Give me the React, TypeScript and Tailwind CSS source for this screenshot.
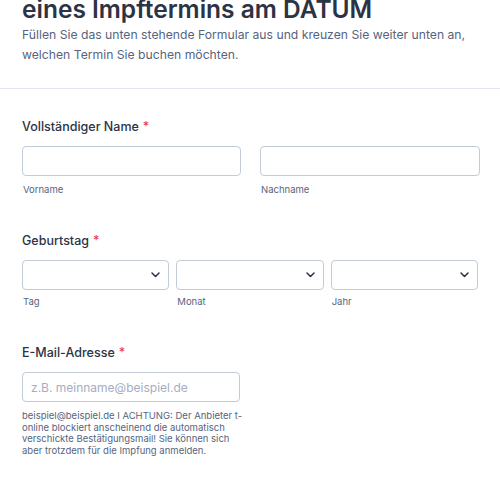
import React from 'react';

const Chevron = () => (
    <svg width="9" height="6" viewBox="0 0 9 6" fill="none" className="shrink-0">
        <path d="M1 1l3.5 3.5L8 1" stroke="#2c3345" strokeWidth="1.5" strokeLinecap="round" strokeLinejoin="round" />
    </svg>
);

const Required = () => <span className="text-[#f23a3c] ml-[4px]">*</span>;

function SelectBox({ label }: { label: string }) {
    return (
        <div className="flex flex-col flex-1">
            <div className="h-[30px] border border-[#c3cad8] rounded-[4px] flex items-center justify-end pr-[8px] bg-white">
                <Chevron />
            </div>
            <span className="text-[9.5px] leading-[12px] text-[#57647e] mt-[6px] pl-[1px]">{label}</span>
        </div>
    );
}

export default function App() {
    return (
        <div className="w-[500px] h-[484px] overflow-hidden bg-white text-[#2c3345]" style={{ fontFamily: 'Inter, "Noto Sans", sans-serif' }}>
            <header className="px-[22px] pb-[23px] border-b border-[#e3e5f5] -mt-[6px]">
                <h1 className="text-[24.5px] font-semibold leading-[30px] text-[#2c3345]">
                    eines Impftermins am DATUM
                </h1>
                <p className="text-[12.2px] leading-[20px] text-[#57647e] mt-[1px]">
                    Füllen Sie das unten stehende Formular aus und kreuzen Sie weiter unten an, welchen Termin Sie buchen möchten.
                </p>
            </header>

            <div className="px-[22px] pt-[29px]">
                <label className="block text-[12.5px] font-medium leading-[18px]">
                    Vollständiger Name<Required />
                </label>
                <div className="flex gap-[19px] mt-[10px]">
                    <div className="flex flex-col w-[219px]">
                        <input className="h-[30px] border border-[#c3cad8] rounded-[4px] outline-none" />
                        <span className="text-[9.5px] leading-[12px] text-[#57647e] mt-[8px] pl-[1px]">Vorname</span>
                    </div>
                    <div className="flex flex-col w-[220px]">
                        <input className="h-[30px] border border-[#c3cad8] rounded-[4px] outline-none" />
                        <span className="text-[9.5px] leading-[12px] text-[#57647e] mt-[8px] pl-[1px]">Nachname</span>
                    </div>
                </div>

                <label className="block text-[12.5px] font-medium leading-[18px] mt-[36px]">
                    Geburtstag<Required />
                </label>
                <div className="flex gap-[7px] mt-[10px] w-[456px]">
                    <SelectBox label="Tag" />
                    <SelectBox label="Monat" />
                    <SelectBox label="Jahr" />
                </div>

                <label className="block text-[12.5px] font-medium leading-[18px] mt-[36px]">
                    E-Mail-Adresse<Required />
                </label>
                <input
                    placeholder="z.B. meinname@beispiel.de"
                    className="block mt-[10px] w-[218px] h-[30px] border border-[#c3cad8] rounded-[4px] px-[8px] text-[12px] placeholder:text-[#a6adbf] outline-none"
                />
                <p className="text-[9.5px] leading-[11.7px] text-[#57647e] mt-[8px] w-[222px]">
                    beispiel@beispiel.de I ACHTUNG: Der Anbieter t-online blockiert anscheinend die automatisch verschickte Bestätigungsmail! Sie können sich aber trotzdem für die Impfung anmelden.
                </p>
            </div>
        </div>
    );
}
